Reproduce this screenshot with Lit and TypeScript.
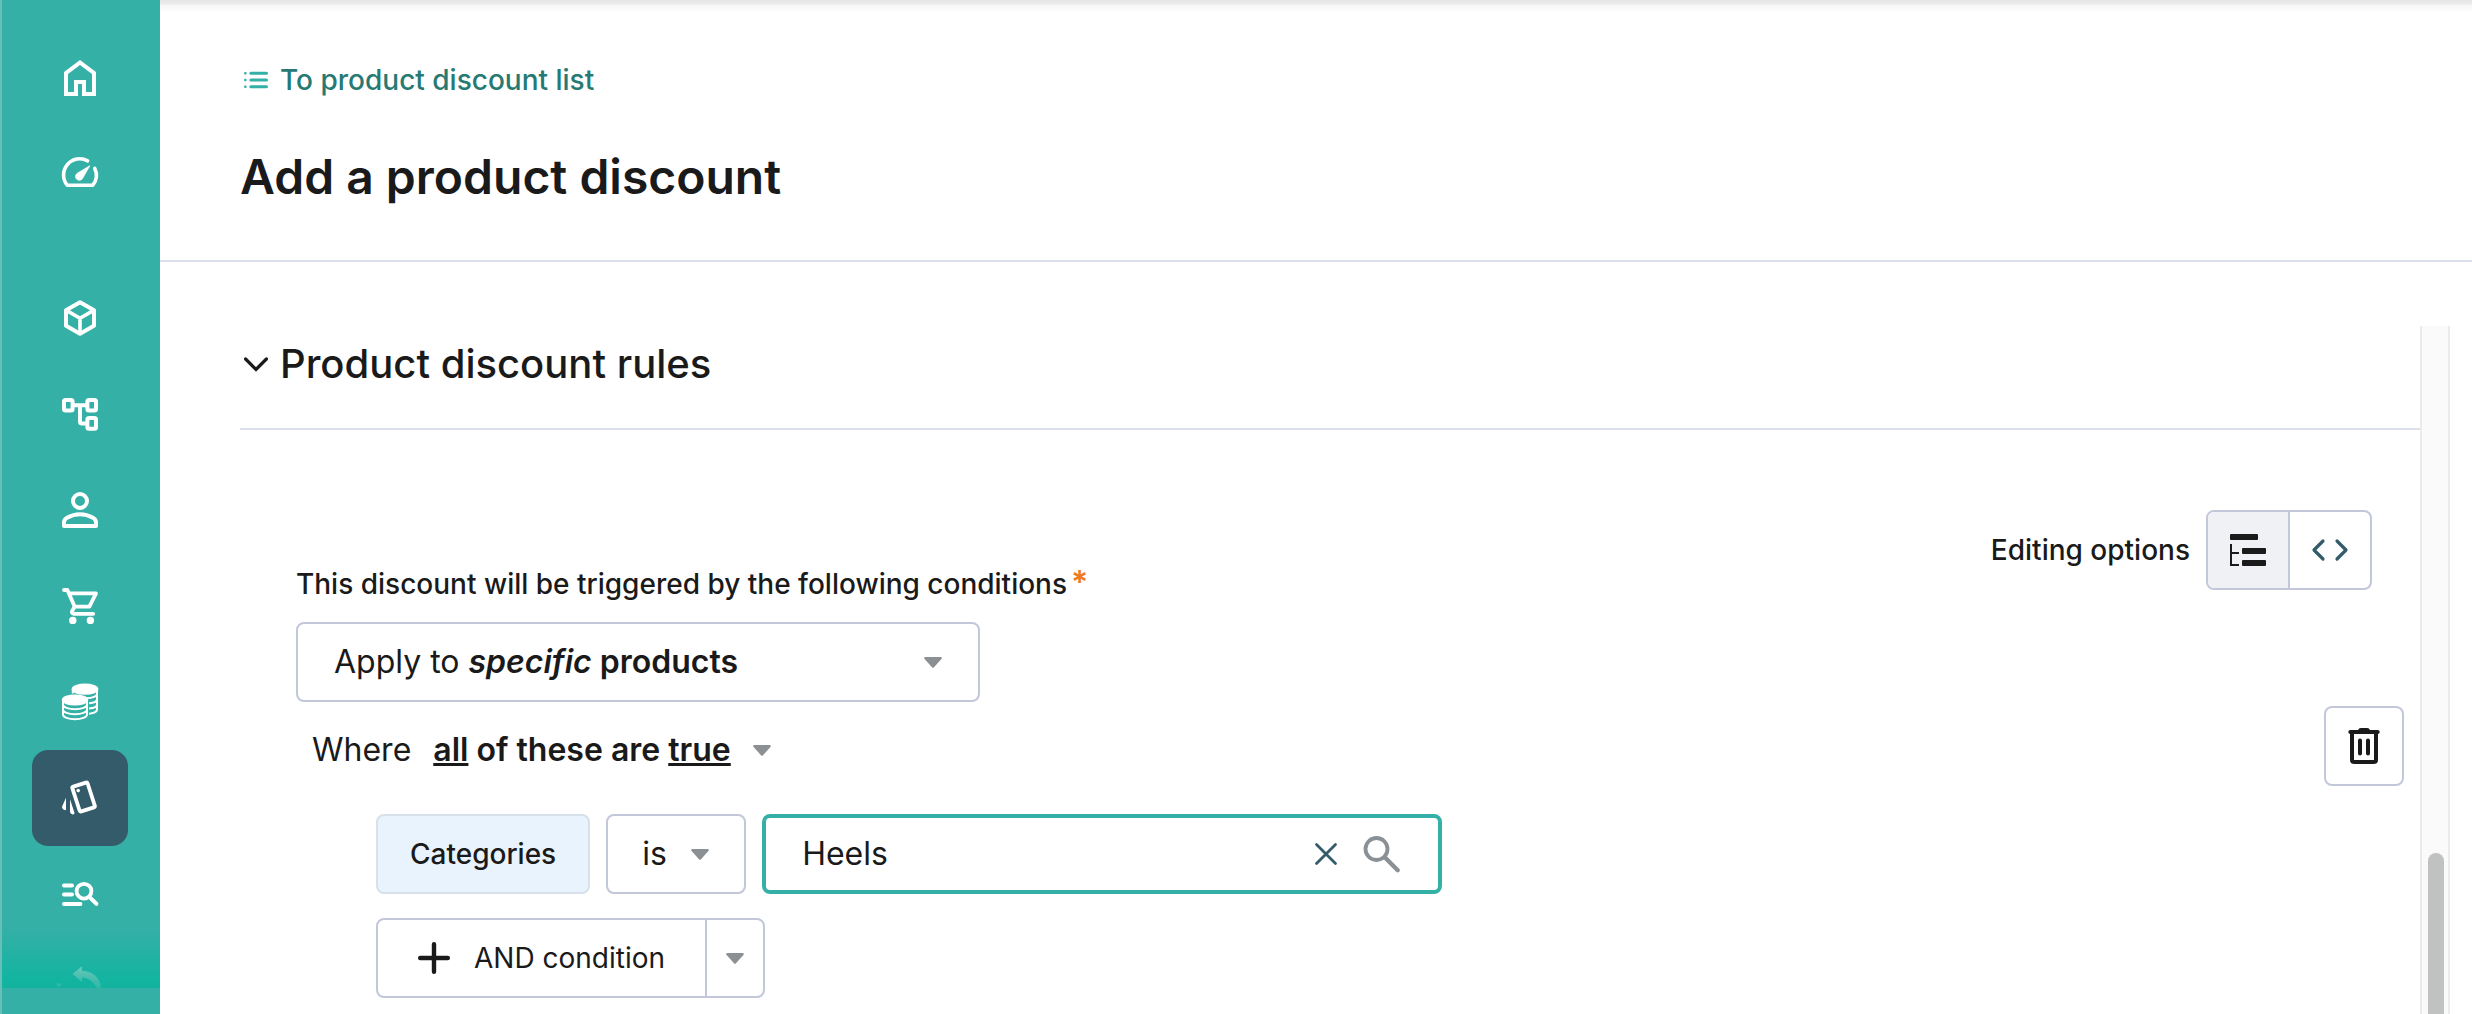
import { LitElement, html, css, svg, nothing, type TemplateResult, type SVGTemplateResult } from "lit";
import { customElement, property, state } from "lit/decorators.js";
import { classMap } from "lit/directives/class-map.js";

/* Navigation glyphs, all drawn on a 24-unit grid. */
const navIcons: Record<string, SVGTemplateResult> = {
  home: svg`<path fill="currentColor" fill-rule="evenodd" d="M6 19h3v-6h6v6h3v-9l-6-4.5L6 10v9Zm-2 2V9l8-6 8 6v12h-7v-6h-2v6H4Z"/>`,
  gauge: svg`
    <path d="M15.8 5.4A8.1 8.1 0 0 0 5.6 17.6H18.4A8.1 8.1 0 0 0 19.4 9.2" fill="none" stroke="currentColor" stroke-width="1.8" stroke-linecap="round" stroke-linejoin="round"/>
    <path d="M16.9 7.9 13.4 14A1.9 1.9 0 1 1 10.7 11.6Z" fill="currentColor" stroke="currentColor" stroke-width=".4" stroke-linejoin="round"/>`,
  cube: svg`
    <path d="M12 4.1 19 8.1v7.8l-7 4-7-4V8.1Z" fill="none" stroke="currentColor" stroke-width="2" stroke-linejoin="round"/>
    <path d="M5.2 8.2 12 12.1l6.8-3.9M12 12v7.6" fill="none" stroke="currentColor" stroke-width="1.8"/>`,
  tree: svg`
    <g fill="none" stroke="currentColor" stroke-width="2">
      <rect x="4" y="5" width="4.3" height="5.3" rx=".8"/>
      <rect x="15.7" y="5" width="4.3" height="5.3" rx=".8"/>
      <rect x="15.7" y="14" width="4.3" height="5.4" rx=".8"/>
      <path d="M8.6 7.6h6.8M12 7.6v8.1a1 1 0 0 0 1 1h2.4"/>
    </g>`,
  person: svg`
    <circle cx="12" cy="7.5" r="3.5" fill="none" stroke="currentColor" stroke-width="2"/>
    <path d="M4 18.3c0-1.1.5-1.9 1.5-2.4C7.4 14.8 9.6 14.1 12 14.1s4.6.7 6.5 1.8c1 .5 1.5 1.3 1.5 2.4V20H4Z" fill="none" stroke="currentColor" stroke-width="2" stroke-linejoin="round"/>`,
  cart: svg`
    <path d="M4 4h1.7l3.6 8.3h7.4L20 5.7H6.6M9.3 12.3l-1.2 2.2c-.4.7 0 1.4.8 1.4h9.7" fill="none" stroke="currentColor" stroke-width="1.9" stroke-linecap="round" stroke-linejoin="round"/>
    <circle cx="8.4" cy="19.2" r="1.85" fill="currentColor"/><circle cx="17.2" cy="19.2" r="1.85" fill="currentColor"/>`,
  coins: svg`
    <g fill="none" stroke="currentColor" stroke-width="1">
      <ellipse cx="14.5" cy="5.6" rx="6.2" ry="2.3" fill="currentColor"/>
      <path d="M20.5 5.6v10.2c0 1-1.4 1.8-4 2.1M8.4 5.6v2.2M20.5 8c0 1.1-2.2 2.1-5.4 2.1M20.5 10.6c0 1-1.6 1.8-4 2M20.5 13.2c0 1-1.6 1.8-4 2"/>
      <ellipse cx="9.5" cy="11" rx="6.1" ry="2.3" fill="currentColor"/>
      <path d="M3.5 11v7.2c0 1.4 2.7 2.4 6 2.4s6-1 6-2.4V11M3.5 13.2c0 1.4 2.7 2.4 6 2.4s6-1 6-2.4M3.5 15.7c0 1.4 2.7 2.4 6 2.4s6-1 6-2.4"/>
    </g>`,
  cards: svg`
    <rect x="9.8" y="5" width="8" height="13" rx=".7" transform="rotate(-18 13.8 11.5)" fill="none" stroke="currentColor" stroke-width="1.9"/>
    <circle cx="11.1" cy="8.3" r=".9" fill="currentColor"/>
    <path d="M7 12.6 9.2 19.2c.2.8-.4 1.2-1.1.9-.8-.3-1.1-.7-1.1-1.5ZM5 11.9v6.2c-1.3-.1-2.2-1-1.9-2Z" fill="currentColor"/>`,
  search: svg`
    <path d="M4 7.8h4M4 12.3h4M4 17h8.2M17 13.8l3.2 3.1" fill="none" stroke="currentColor" stroke-width="2" stroke-linecap="round"/>
    <circle cx="14" cy="10.6" r="3.7" fill="none" stroke="currentColor" stroke-width="1.9"/>`,
  undo: svg`
    <linearGradient id="fade" x1="0" y1="0" x2="0" y2="1"><stop offset="0" stop-color="#6cc6ba"/><stop offset="1" stop-color="#2bb8a6"/></linearGradient>
    <path d="M8.3 4 13 0v2.400c5.600.4 9.200 3.600 9.600 8.800h-2.200C18.600 7.600 16.200 6 13 5.800V8Z" fill="url(#fade)"/>
    <path d="M0 8.800h2.800L1.400 10.600Z" fill="#35b8a8"/>`,
};

const caret = html`<svg class="caret" viewBox="0 0 18 11" aria-hidden="true"><path d="M1.500 0h15c1.200 0 1.700 1.300.9 2.100L10 10.200a1.400 1.400 0 0 1-2 0L.6 2.100C-.2 1.300.3 0 1.500 0Z" fill="#8b9095"/></svg>`;

const caretStyles = css`
  .caret { display: block; flex: none; width: 18px; height: 11px; pointer-events: none; }
`;

@customElement("side-nav")
export class SideNav extends LitElement {
  static styles = css`
    :host { display: flex; flex-direction: column; flex: none; width: 160px; box-sizing: border-box; border-left: 2px solid #66c0b8; background: #35b0a7; color: #fff; }
    .nav { position: relative; flex: 1; min-height: 0; overflow: hidden; padding-top: 30px; }
    .nav::after { content: ""; position: absolute; inset: auto 0 0 0; height: 60px; background: linear-gradient(rgba(18, 180, 160, 0), #12b4a0 88%); pointer-events: none; }
    .group { display: flex; flex-direction: column; align-items: center; }
    .group + .group { margin-top: 48px; }
    .item { display: grid; place-items: center; width: 96px; height: 96px; margin-right: 2px; border-radius: 16px; color: inherit; }
    .active { background: #335b6a; }
    .faded { position: relative; z-index: 1; }
    svg { display: block; width: 48px; height: 48px; }
    .foot { flex: none; height: 26px; }
  `;

  private item(icon: string, label: string, cls = "") {
    return html`<a class=${classMap({ item: true, active: cls === "active", faded: cls === "faded" })} href="#${icon}" aria-label=${label} aria-current=${cls === "active" ? "page" : nothing}>
      <svg viewBox="0 0 24 24" aria-hidden="true">${navIcons[icon]}</svg>
    </a>`;
  }

  render() {
    return html`
      <nav class="nav" aria-label="Main">
        <div class="group">${this.item("home", "Home")}${this.item("gauge", "Dashboard")}</div>
        <div class="group">
          ${this.item("cube", "Products")}${this.item("tree", "Categories")}${this.item("person", "Customers")}
          ${this.item("cart", "Orders")}${this.item("coins", "Pricing")}${this.item("cards", "Discounts", "active")}
          ${this.item("search", "Search rules")}${this.item("undo", "Returns", "faded")}
        </div>
      </nav>
      <div class="foot"></div>
    `;
  }
}

/* Drop-down whose current value may carry rich formatting; the native select lies on top of it. */
@customElement("rich-select")
export class RichSelect extends LitElement {
  static styles = [caretStyles, css`
    :host { display: block; }
    b { font-weight: 600; }
    .field { display: grid; box-sizing: border-box; height: 80px; border-radius: 8px; font-size: 32px; line-height: 40px; }
    .field > * { grid-area: 1 / 1; }
    .boxed { width: 684px; max-width: 100%; border: 2px solid #c2c8d9; background: #fff; padding: 0 36px; }
    .plain { height: 40px; }
    .value { display: flex; align-items: center; justify-content: space-between; gap: 22px; white-space: pre; }
    select { appearance: none; width: 100%; height: 100%; border: 0; padding: 0; margin: 0; opacity: 0; font: inherit; cursor: pointer; }
    .field:focus-within { outline: 2px solid #35b0a7; outline-offset: 2px; }
  `];
  @property() label = "";
  @property({ type: Boolean }) boxed = false;
  @property({ attribute: false }) options: { text: string; view: TemplateResult }[] = [];
  @state() private index = 0;

  render() {
    return html`<div class=${classMap({ field: true, boxed: this.boxed, plain: !this.boxed })}>
      <span class="value" aria-hidden="true"><span>${this.options[this.index]?.view}</span>${caret}</span>
      <select aria-label=${this.label} @change=${(e: Event) => (this.index = (e.target as HTMLSelectElement).selectedIndex)}>
        ${this.options.map((o) => html`<option>${o.text}</option>`)}
      </select>
    </div>`;
  }
}

const applyOptions = [
  { text: "Apply to specific products", view: html`Apply to <b><i>specific</i> products</b>` },
  { text: "Apply to all products", view: html`Apply to <b><i>all</i> products</b>` },
];
const matchOptions = [
  { text: "all of these are true", view: html`<b><u>all</u> of these are <u>true</u></b>` },
  { text: "any of these are true", view: html`<b><u>any</u> of these are <u>true</u></b>` },
];

@customElement("app-root")
export class AppRoot extends LitElement {
  static styles = [caretStyles, css`
    :host { display: flex; height: 100vh; overflow: hidden; background: #fff; color: #1a1a1a; font-family: Inter, "Liberation Sans", sans-serif; font-size: 28px; line-height: 40px; }
    button, input, select { font: inherit; color: inherit; margin: 0; }
    button { background: none; border: 0; padding: 0; cursor: pointer; }
    svg { display: block; flex: none; }
    .main { flex: 1; min-width: 0; display: flex; flex-direction: column; }
    .header { flex: none; padding: 60px 80px 52px; border-bottom: 2px solid #dbe0ea; background: linear-gradient(#e6e6e6, #ebebeb 4px, #f6f6f6 5px, #fff 13px); }
    .back { display: flex; width: fit-content; align-items: center; gap: 12px; padding-left: 4px; color: #277a73; font-weight: 500; text-decoration: none; }
    .back svg { width: 24px; height: 24px; color: #35b0a7; }
    h1 { margin: 46px 0 0; font-size: 48px; line-height: 62px; font-weight: 600; }
    .scroller { flex: 1; min-height: 0; display: flex; margin: 64px 22px 0 80px; }
    .content { flex: 1; min-width: 0; overflow: hidden; }
    .track { flex: none; width: 30px; box-sizing: border-box; border: solid #ebebeb; border-width: 0 2px; background: #fafafa; padding: 527px 4px 0 6px; overflow: hidden; }
    .thumb { width: 16px; height: 600px; border-radius: 8px; background: #c0c2c1; }
    h2 { margin: 0; padding: 14px 0 40px; border-bottom: 2px solid #dbe0ea; font-size: 40px; line-height: 48px; font-weight: 500; }
    .toggle { display: flex; align-items: center; gap: 12px; padding-left: 4px; line-height: 48px; font-weight: 500; }
    .toggle svg { width: 24px; height: 24px; }
    .rules { padding: 80px 0 0 56px; }
    .top { display: flex; align-items: flex-start; justify-content: space-between; }
    .trigger { display: flex; flex-direction: column; gap: 18px; padding-top: 54px; }
    .caption { font-weight: 500; }
    .required { color: #f07a22; margin-left: 4px; font-size: 32px; line-height: 32px; font-weight: 600; }
    .editing { display: flex; align-items: center; gap: 16px; margin-right: 48px; font-weight: 500; }
    .segment { display: flex; box-sizing: border-box; height: 80px; border: 2px solid #c2c8d9; border-radius: 8px; overflow: hidden; }
    .segment button { display: grid; place-items: center; width: 80px; }
    .segment button + button { width: 82px; border-left: 2px solid #c2c8d9; }
    .segment .on { background: #eff1f4; }
    .segment svg, .trash svg { width: 48px; height: 48px; }
    .where { display: flex; align-items: center; justify-content: space-between; padding: 0 16px; margin-top: 4px; }
    .sentence { display: flex; gap: 22px; padding-top: 8px; font-size: 32px; }
    .trash { display: grid; place-items: center; box-sizing: border-box; width: 80px; height: 80px; border: 2px solid #c2c8d9; border-radius: 8px; }
    .list { display: flex; flex-direction: column; gap: 24px; padding: 28px 0 24px 80px; }
    .row { display: flex; gap: 16px; }
    .chip { display: flex; align-items: center; box-sizing: border-box; height: 80px; padding: 0 32px; border: 2px solid #d8e0ea; border-radius: 8px; background: #e9f3fd; font-weight: 500; }
    .operator { position: relative; }
    .operator select { appearance: none; box-sizing: border-box; width: 140px; height: 80px; padding: 0 60px 0 34px; border: 2px solid #c2c8d9; border-radius: 8px; background: #fff; font-size: 32px; line-height: 40px; }
    .operator .caret { position: absolute; right: 37px; top: 35px; }
    .search { display: flex; align-items: center; box-sizing: border-box; width: 680px; height: 80px; padding: 0 28px 0 36px; border: 4px solid #35b0a7; border-radius: 8px; }
    .search input { flex: 1; min-width: 0; border: 0; outline: 0; padding: 0; background: none; font-size: 32px; line-height: 40px; }
    .search button { display: grid; place-items: center; width: 56px; height: 56px; }
    .search svg { width: 40px; height: 40px; }
    .split { display: flex; box-sizing: border-box; height: 80px; border: 2px solid #c2c8d9; border-radius: 8px; }
    .add { display: flex; align-items: center; gap: 24px; padding: 0 40px; }
    .add svg { width: 32px; height: 32px; }
    .more { display: grid; place-items: center; width: 58px; border-left: 2px solid #c2c8d9; }
  `];

  @state() private mode: "tree" | "code" = "tree";
  @state() private open = true;
  @state() private term = "Heels";

  render() {
    return html`
      <side-nav></side-nav>
      <main class="main">
        <header class="header">
          <a class="back" href="#discounts">
            <svg viewBox="0 0 24 24" aria-hidden="true"><g stroke="currentColor" stroke-width="3" stroke-linecap="round"><path d="M6.800 5.300h15.700M6.800 12h15.700M6.800 18.700h15.700"/><path stroke-width="2.600" d="M1.300 5.300h.1M1.300 12h.1M1.300 18.700h.1"/></g></svg>
            <span>To product discount list</span>
          </a>
          <h1>Add a product discount</h1>
        </header>
        <div class="scroller">
          <section class="content">
            <h2>
              <button class="toggle" aria-expanded=${this.open} @click=${() => (this.open = !this.open)}>
                <svg viewBox="0 0 24 24" aria-hidden="true"><path d="m1.600 7 10.400 10.400L22.400 7" fill="none" stroke="currentColor" stroke-width="3.200" stroke-linecap="round"/></svg>
                <span>Product discount rules</span>
              </button>
            </h2>
            ${this.open ? this.rules() : nothing}
          </section>
          <div class="track"><div class="thumb"></div></div>
        </div>
      </main>
    `;
  }

  private rules() {
    return html`
      <div class="rules">
        <div class="top">
          <div class="trigger">
            <div class="caption">This discount will be triggered by the following conditions<span class="required">*</span></div>
            <rich-select boxed label="This discount will be triggered by the following conditions" .options=${applyOptions}></rich-select>
          </div>
          <div class="editing">
            <span id="editing">Editing options</span>
            <div class="segment" role="group" aria-labelledby="editing">
              <button class=${classMap({ on: this.mode === "tree" })} aria-label="Builder" aria-pressed=${this.mode === "tree"} @click=${() => (this.mode = "tree")}>
                <svg viewBox="0 0 48 48" aria-hidden="true">
                  <g fill="#1a1a1a"><rect x="6" y="8" width="28" height="6" rx="1"/><rect x="18" y="22" width="24" height="6" rx="1"/><rect x="18" y="34" width="24" height="6" rx="1"/></g>
                  <path d="M7 18v21h8M7 27h8" fill="none" stroke="#1a1a1a" stroke-width="2"/>
                </svg>
              </button>
              <button class=${classMap({ on: this.mode === "code" })} aria-label="Code" aria-pressed=${this.mode === "code"} @click=${() => (this.mode = "code")}>
                <svg viewBox="0 0 48 48" aria-hidden="true"><path d="m17 15-9 9 9 9M31 15l9 9-9 9" fill="none" stroke="#335b6a" stroke-width="3.200" stroke-linecap="round" stroke-linejoin="round"/></svg>
              </button>
            </div>
          </div>
        </div>
        <div class="where">
          <div class="sentence"><span>Where</span><rich-select label="Match" .options=${matchOptions}></rich-select></div>
          <button class="trash" aria-label="Delete">
            <svg viewBox="0 0 48 48" aria-hidden="true">
              <g fill="none" stroke="#1a1a1a" stroke-width="4" stroke-linecap="round">
                <path d="M12 10v28a2 2 0 0 0 2 2h20a2 2 0 0 0 2-2V10M10.300 10h27.400" />
                <path d="M20 18.500v13M28 18.500v13"/>
              </g>
              <path d="M18 9c0-2 1.200-3 3-3h6c1.800 0 3 1 3 3Z" fill="#1a1a1a"/>
            </svg>
          </button>
        </div>
        <div class="list">
          <div class="row">
            <span class="chip">Categories</span>
            <div class="operator">
              <select aria-label="Operator"><option>is</option></select>
              ${caret}
            </div>
            <div class="search">
              <input type="text" aria-label="Categories" .value=${this.term} @input=${(e: Event) => (this.term = (e.target as HTMLInputElement).value)} />
              <button aria-label="Clear" @click=${() => (this.term = "")}>
                <svg viewBox="0 0 40 40" aria-hidden="true"><path d="m10.500 10.500 19 19M29.500 10.500l-19 19" fill="none" stroke="#335b6a" stroke-width="2.800" stroke-linecap="round"/></svg>
              </button>
              <button aria-label="Search">
                <svg viewBox="0 0 40 40" aria-hidden="true"><g fill="none" stroke="#8b9095" stroke-width="3.800"><circle cx="14.500" cy="15" r="11"/><path d="m22.500 23 13.200 13.200" stroke-width="4.400" stroke-linecap="round"/></g></svg>
              </button>
            </div>
          </div>
          <div class="row">
            <div class="split">
              <button class="add">
                <svg viewBox="0 0 32 32" aria-hidden="true"><path d="M16 2.200v27.600M2.200 16h27.600" fill="none" stroke="#1a1a1a" stroke-width="4.400" stroke-linecap="round"/></svg>
                <span>AND condition</span>
              </button>
              <button class="more" aria-label="More condition types">${caret}</button>
            </div>
          </div>
        </div>
      </div>
    `;
  }
}
